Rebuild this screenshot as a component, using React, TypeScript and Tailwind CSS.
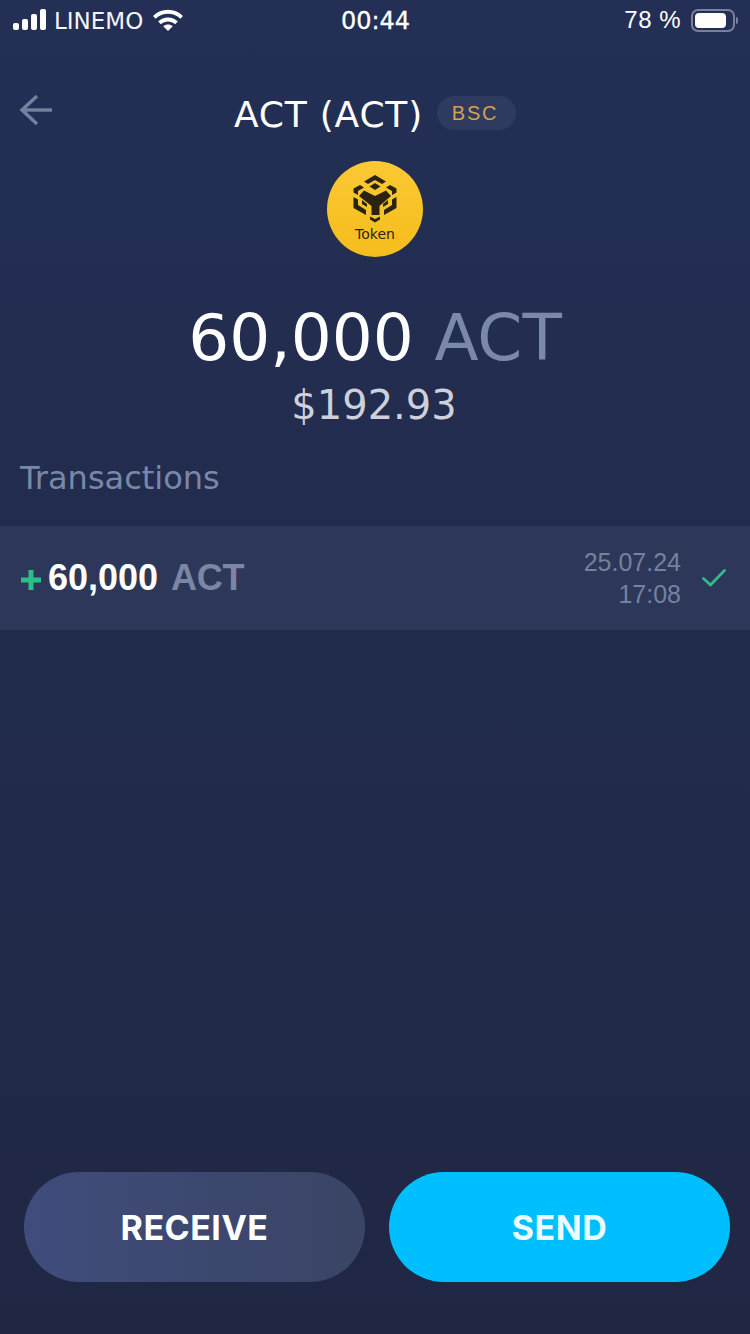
function SignalBars() {
    return (
        <svg width="34" height="22" viewBox="0 0 34 22" fill="#fff">
            <rect x="0" y="14" width="6" height="7" rx="2" />
            <rect x="9" y="10" width="6" height="11" rx="2" />
            <rect x="18" y="5" width="6" height="16" rx="2" />
            <rect x="27" y="0" width="6" height="21" rx="2" />
        </svg>
    );
}

function Wifi() {
    return (
        <svg width="30" height="22" viewBox="0 0 30 22" fill="#fff">
            <path d="M0 7 C8 -1.5 22 -1.5 30 7 L27.4 9.8 C20.6 3 9.4 3 2.6 9.8 Z" />
            <path d="M5.2 12.4 C10.6 7.2 19.4 7.2 24.8 12.4 L22.1 15.2 C18 11.5 12 11.5 7.9 15.2 Z" />
            <path d="M15 22 L10.2 17.2 C13 15 17 15 19.8 17.2 Z" />
        </svg>
    );
}

function Battery() {
    return (
        <div className="flex items-center gap-[1px]">
            <div className="w-[44px] h-[23px] rounded-[7px] border-2 border-[#79809a] p-[2px]">
                <div className="w-[31px] h-full rounded-[4px] bg-white" />
            </div>
            <div className="w-[2px] h-[7px] rounded-r-sm bg-[#79809a]" />
        </div>
    );
}

function TokenLogo() {
    return (
        <div className="relative w-[96px] h-[96px] rounded-full bg-[linear-gradient(180deg,#fbc934,#f5bd1c)] flex flex-col items-center">
            <svg className="mt-[14px]" width="44" height="48" viewBox="0 0 44 48" fill="#2a2310">
                <path d="M22 0 L33 6.5 L29 9 L22 5 L15 9 L11 6.5 Z" />
                <path d="M22 8 L27.5 11.5 L22 15 L16.5 11.5 Z" />
                <path d="M7 10 L11 12.5 L5 16 L5 20 L0.5 17.5 L0.5 13.5 Z" />
                <path d="M37 10 L43.5 13.5 L43.5 17.5 L39 20 L39 16 L33 12.5 Z" />
                <path d="M11 15.5 L22 21 L33 15.5 L38 21 L26.5 31 L26.5 40 L18.5 40 L18.5 31 L6 21 Z" />
                <path d="M0.5 22 L5 24.5 L5 30 L13 35 L13 40 L0.5 33 Z" />
                <path d="M43.5 22 L39 24.5 L39 30 L31 35 L31 40 L43.5 33 Z" />
                <path d="M9 25 L14 29 L14 32 L9 29 Z" />
                <path d="M35 25 L30 29 L30 32 L35 29 Z" />
                <path d="M17 41.5 L22 44 L27 41.5 L27 44.5 L22 47.5 L17 44.5 Z" />
            </svg>
            <span className="absolute top-[63px] text-[14px] leading-[20px] text-[#2a2310]">Token</span>
        </div>
    );
}

export default function App() {
    return (
        <div className="w-[750px] h-[1334px] flex flex-col bg-[linear-gradient(180deg,#232f55,#1f2743)] font-['DejaVu_Sans',sans-serif] text-white overflow-hidden">
            <div className="h-[40px] shrink-0 grid grid-cols-3 items-center pl-[13px] pr-[12px]">
                <div className="flex items-center">
                    <SignalBars />
                    <span className="ml-[7px] mt-[1px] text-[23px] leading-[28px] text-[#f4f5f8]">LINEMO</span>
                    <span className="ml-[10px]"><Wifi /></span>
                </div>
                <div className="mt-[1px] text-center text-[24px] leading-[28px] [-webkit-text-stroke:0.3px_#fff]">00:44</div>
                <div className="flex items-center justify-end">
                    <span className="font-['Liberation_Sans',sans-serif] text-[24px] leading-[28px] tracking-[0.5px]">78 %</span>
                    <span className="ml-[10px]"><Battery /></span>
                </div>
            </div>

            <div className="relative mt-[50px] h-[50px] flex items-center justify-center">
                <svg className="absolute left-[19px] top-[4px]" width="34" height="32" viewBox="0 0 34 32" fill="none" stroke="#75829f" strokeWidth="3.4">
                    <path d="M33 16 H4" />
                    <path d="M18 2 L3 16 L18 30" />
                </svg>
                <h1 className="text-[36px] leading-[50px] tracking-[0.8px] text-white font-normal">ACT (ACT)</h1>
                <span className="ml-[14px] mt-[-4px] pr-[3px] w-[79px] h-[34px] rounded-full bg-[#2e3a5e] flex items-center justify-center font-['Liberation_Sans',sans-serif] text-[20px] tracking-[1.7px] text-[#d9a052]">BSC</span>
            </div>

            <div className="mt-[21px] flex justify-center">
                <TokenLogo />
            </div>

            <div className="mt-[35px] text-center text-[64.5px] leading-[92px]">
                60,000 <span className="text-[#7a88aa]">ACT</span>
            </div>
            <div className="mt-[-6px] pr-[2px] text-center text-[40px] leading-[54px] text-[#cdd0da]">$192.93</div>

            <div className="mt-[24px] px-[20px] text-[32px] leading-[44px] text-[#7a88a8]">Transactions</div>

            <div className="mt-[26px] h-[104px] bg-[#2c3759] pl-[21px] pr-[24px] flex items-center justify-between">
                <div className="flex items-center font-['Liberation_Sans',sans-serif] font-bold text-[36px] leading-[44px]">
                    <svg className="mt-[4px] mr-[7px]" width="20" height="20" viewBox="0 0 20 20" fill="#2dbd8b">
                        <rect x="7.5" y="0" width="5" height="20" />
                        <rect x="0" y="7.5" width="20" height="5" />
                    </svg>
                    <span>60,000</span>
                    <span className="ml-[13px] tracking-[-0.3px] text-[#7a86a3]">ACT</span>
                </div>
                <div className="flex items-center">
                    <div className="text-right font-['Liberation_Sans',sans-serif] text-[25px] leading-[32px] text-[#75829f]">
                        <div>25.07.24</div>
                        <div>17:08</div>
                    </div>
                    <svg className="ml-[21px]" width="24" height="18" viewBox="0 0 24 18" fill="none" stroke="#2dbd8b" strokeWidth="2.8" strokeLinecap="round" strokeLinejoin="round">
                        <path d="M1.5 9.5 L8.5 16 L22.5 1.5" />
                    </svg>
                </div>
            </div>

            <div className="mt-auto mb-[52px] pl-[24px] pr-[20px] flex gap-[24px] font-['Inter',sans-serif] font-bold text-[34px] tracking-[0.5px]">
                <button className="w-[341px] h-[110px] rounded-[55px] bg-[linear-gradient(90deg,#404c7c,#3a4464)] text-white">RECEIVE</button>
                <button className="w-[341px] h-[110px] rounded-[55px] bg-[#00bfff] text-[#ecfbff]">SEND</button>
            </div>
        </div>
    );
}
